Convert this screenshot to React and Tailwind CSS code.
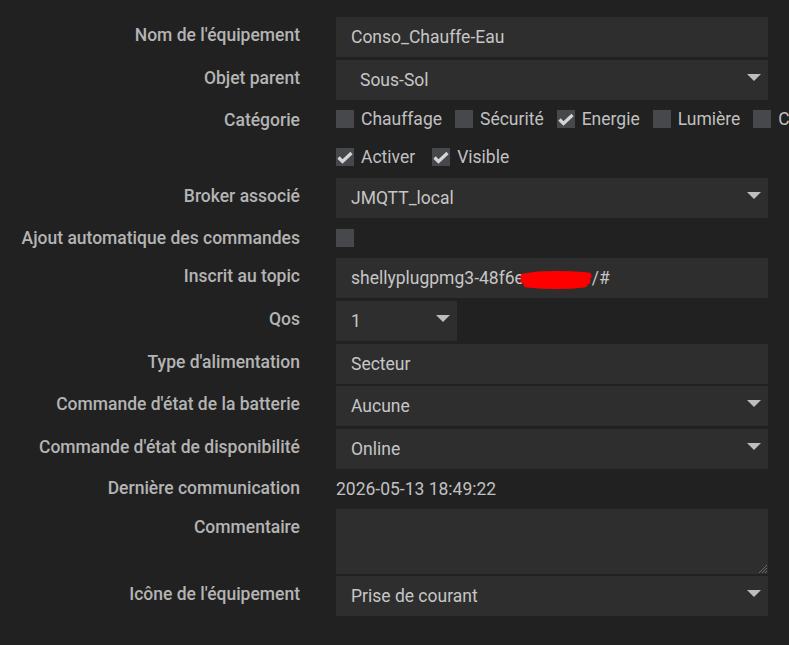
const font = { fontFamily: "Roboto, 'Noto Sans', sans-serif" };

function Arrow() {
  return (
    <svg width="14" height="7" viewBox="0 0 14 7" className="absolute right-[7px] top-[14px]">
      <path d="M0 0 H14 L7 7 Z" fill="#bdbdbd" />
    </svg>
  );
}

function Box({ checked }) {
  return (
    <span className="w-[18px] h-[18px] bg-[#46484b] flex items-center justify-center shrink-0">
      {checked && (
        <svg width="16" height="13" viewBox="0 0 16 13">
          <path d="M1.5 6.5 L5.5 10.5 L14.5 2" stroke="#d6d6d6" strokeWidth="3.2" fill="none" />
        </svg>
      )}
    </span>
  );
}

function Check({ label, checked }) {
  return (
    <span className="flex items-center gap-[7px] whitespace-nowrap">
      <Box checked={checked} />
      <span>{label}</span>
    </span>
  );
}

function Row({ label, mt = "mt-0", h = "h-[40px]", pt = "pt-[6px]", children }) {
  return (
    <div className={`flex ${mt} ${h}`}>
      <div className={`w-[300px] shrink-0 text-right font-medium text-[#b4b4b4] ${pt} leading-[24px] whitespace-nowrap`}>
        {label}
      </div>
      <div className="ml-[36px] w-[432px] shrink-0">{children}</div>
    </div>
  );
}

function Input({ children, className = "" }) {
  return (
    <div className={`h-[40px] bg-[#2e2e2e] flex items-center pl-[15px] text-[#c6c6c6] relative whitespace-nowrap ${className}`}>
      {children}
    </div>
  );
}

export default function App() {
  return (
    <div className="w-[789px] h-[645px] bg-[#212121] overflow-hidden text-[17.5px]" style={font}>
      <div className="pt-[17px]">
        <Row label="Nom de l'équipement">
          <Input>Conso_Chauffe-Eau</Input>
        </Row>
        <Row label="Objet parent" mt="mt-[3px]">
          <Input className="pl-[24px]">
            Sous-Sol
            <Arrow />
          </Input>
        </Row>
        <Row label="Catégorie" h="h-[38px]" pt="pt-[8px]">
          <div className="h-[38px] flex items-center gap-[13px] text-[#c0c0c0]">
            <Check label="Chauffage" />
            <Check label="Sécurité" />
            <Check label="Energie" checked />
            <Check label="Lumière" />
            <Check label="Confort" />
          </div>
        </Row>
        <Row label="" h="h-[38px]">
          <div className="h-[38px] flex items-center gap-[17px] text-[#c0c0c0]">
            <Check label="Activer" checked />
            <Check label="Visible" checked />
          </div>
        </Row>
        <Row label="Broker associé" mt="mt-[2px]">
          <Input>
            JMQTT_local
            <Arrow />
          </Input>
        </Row>
        <Row label="Ajout automatique des commandes" pt="pt-[8px]">
          <div className="h-[40px] flex items-center">
            <Box />
          </div>
        </Row>
        <Row label="Inscrit au topic">
          <Input>
            shellyplugpmg3-48f6e
            <span className="relative inline-block w-[68px] h-[20px]">
              <svg width="76" height="24" viewBox="0 0 76 24" className="absolute left-[-6px] top-[-2px]">
                <path d="M6 11 C22 8, 45 8, 70 10 M6 14 C25 13, 50 13, 69 15 M9 18 C30 20, 50 20, 66 18" stroke="#ff0000" strokeWidth="7" strokeLinecap="round" fill="none" />
              </svg>
            </span>
            /#
          </Input>
        </Row>
        <Row label="Qos" mt="mt-[3px]">
          <Input className="w-[121px]">
            1
            <Arrow />
          </Input>
        </Row>
        <Row label="Type d'alimentation" mt="mt-[3px]">
          <Input>Secteur</Input>
        </Row>
        <Row label="Commande d'état de la batterie" mt="mt-[2px]">
          <Input>
            Aucune
            <Arrow />
          </Input>
        </Row>
        <Row label="Commande d'état de disponibilité" mt="mt-[3px]">
          <Input>
            Online
            <Arrow />
          </Input>
        </Row>
        <Row label="Dernière communication" pt="pt-[7px]">
          <div className="h-[40px] flex items-center text-[#c0c0c0]">2026-05-13 18:49:22</div>
        </Row>
        <Row label="Commentaire" h="h-[65px]">
          <div className="h-[65px] bg-[#2e2e2e] relative">
            <svg width="10" height="10" viewBox="0 0 10 10" className="absolute right-0 bottom-0">
              <path d="M9 1 L1 9 M9 4 L4 9 M9 7 L7 9" stroke="#6a6a6a" strokeWidth="1" />
            </svg>
          </div>
        </Row>
        <Row label="Icône de l'équipement" mt="mt-[2px]">
          <Input>
            Prise de courant
            <Arrow />
          </Input>
        </Row>
      </div>
    </div>
  );
}
